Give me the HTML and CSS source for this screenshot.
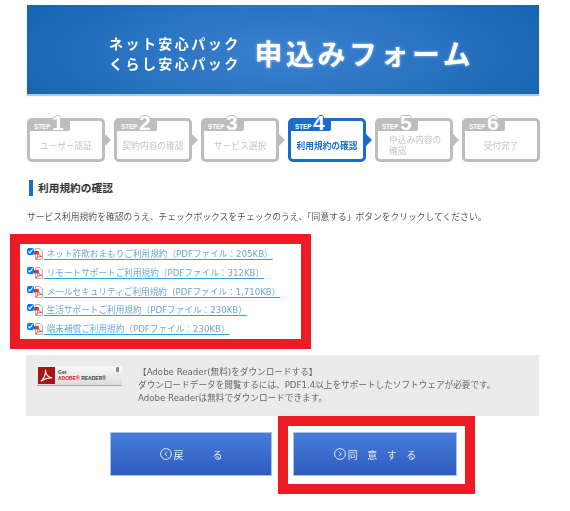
FILE: index.html
```html
<!DOCTYPE html>
<html lang="ja">
<head>
<meta charset="utf-8">
<title>申込みフォーム</title>
<link rel="stylesheet" href="styles.css">
</head>
<body>
<header class="banner">
  <div class="banner-sub"><span>ネット安心パック</span><span>くらし安心パック</span></div>
  <h1 class="banner-title">申込みフォーム</h1>
</header>

<ol class="steps">
  <li class="step"><div class="tab"><span class="tab-word">STEP</span><span class="tab-num">1</span></div><div class="step-label">ユーザー認証</div></li>
  <li class="step"><div class="tab"><span class="tab-word">STEP</span><span class="tab-num">2</span></div><div class="step-label">契約内容の確認</div></li>
  <li class="step"><div class="tab"><span class="tab-word">STEP</span><span class="tab-num">3</span></div><div class="step-label">サービス選択</div></li>
  <li class="step step-active"><div class="tab"><span class="tab-word">STEP</span><span class="tab-num">4</span></div><div class="step-label">利用規約の確認</div></li>
  <li class="step"><div class="tab"><span class="tab-word">STEP</span><span class="tab-num">5</span></div><div class="step-label step-label-wrap">申込み内容の<br>確認</div></li>
  <li class="step step-last"><div class="tab"><span class="tab-word">STEP</span><span class="tab-num">6</span></div><div class="step-label">受付完了</div></li>
</ol>

<h2 class="section-title">利用規約の確認</h2>
<p class="lead">サービス利用規約を確認のうえ、チェックボックスをチェックのうえ、「同意する」ボタンをクリックしてください。</p>

<ul class="terms">
  <li class="term"><input class="term-check" type="checkbox" checked><svg class="pdf" viewBox="0 0 9 12"><path d="M1.500 .5h4.500l2.500 2.500v8.500h-7z" fill="#f7f2f2" stroke="#a89090" stroke-width=".7"/><path d="M0 3h4.500v3.500h-4.500z" fill="#b8474a"/><path d="M2 11c1.500-2 2.500-5 2-8 0 3 1.500 5 4 5.500-2.500-.3-4.500 .6-6 2.500z" fill="none" stroke="#c4474b" stroke-width=".8"/></svg><a class="term-link" href="#">&nbsp;ネット詐欺おまもりご利用規約（PDFファイル：205KB）</a></li>
  <li class="term"><input class="term-check" type="checkbox" checked><svg class="pdf" viewBox="0 0 9 12"><path d="M1.500 .5h4.500l2.500 2.500v8.500h-7z" fill="#f7f2f2" stroke="#a89090" stroke-width=".7"/><path d="M0 3h4.500v3.500h-4.500z" fill="#b8474a"/><path d="M2 11c1.500-2 2.500-5 2-8 0 3 1.500 5 4 5.500-2.500-.3-4.500 .6-6 2.500z" fill="none" stroke="#c4474b" stroke-width=".8"/></svg><a class="term-link" href="#">&nbsp;リモートサポートご利用規約（PDFファイル：312KB）</a></li>
  <li class="term"><input class="term-check" type="checkbox" checked><svg class="pdf" viewBox="0 0 9 12"><path d="M1.500 .5h4.500l2.500 2.500v8.500h-7z" fill="#f7f2f2" stroke="#a89090" stroke-width=".7"/><path d="M0 3h4.500v3.500h-4.500z" fill="#b8474a"/><path d="M2 11c1.500-2 2.500-5 2-8 0 3 1.500 5 4 5.500-2.500-.3-4.500 .6-6 2.500z" fill="none" stroke="#c4474b" stroke-width=".8"/></svg><a class="term-link" href="#">&nbsp;メールセキュリティご利用規約（PDFファイル：1,710KB）</a></li>
  <li class="term"><input class="term-check" type="checkbox" checked><svg class="pdf" viewBox="0 0 9 12"><path d="M1.500 .5h4.500l2.500 2.500v8.500h-7z" fill="#f7f2f2" stroke="#a89090" stroke-width=".7"/><path d="M0 3h4.500v3.500h-4.500z" fill="#b8474a"/><path d="M2 11c1.500-2 2.500-5 2-8 0 3 1.500 5 4 5.500-2.500-.3-4.500 .6-6 2.500z" fill="none" stroke="#c4474b" stroke-width=".8"/></svg><a class="term-link" href="#">&nbsp;生活サポートご利用規約（PDFファイル：230KB）</a></li>
  <li class="term"><input class="term-check" type="checkbox" checked><svg class="pdf" viewBox="0 0 9 12"><path d="M1.500 .5h4.500l2.500 2.500v8.500h-7z" fill="#f7f2f2" stroke="#a89090" stroke-width=".7"/><path d="M0 3h4.500v3.500h-4.500z" fill="#b8474a"/><path d="M2 11c1.500-2 2.500-5 2-8 0 3 1.500 5 4 5.500-2.500-.3-4.500 .6-6 2.500z" fill="none" stroke="#c4474b" stroke-width=".8"/></svg><a class="term-link" href="#">&nbsp;端末補償ご利用規約（PDFファイル：230KB）</a></li>
</ul>

<section class="reader">
  <a class="reader-badge" href="#">
    <svg class="reader-logo" viewBox="0 0 18 18"><rect width="18" height="18" fill="#a81515"/><path d="M3 15c3-2 5-7 5-12 0 5 3 8 7 8.500-4-.3-8 1-12 3.500z" fill="none" stroke="#f3e7e7" stroke-width="1.300"/></svg>
    <span class="reader-copy"><span class="reader-get">Get</span><span class="reader-name"><b class="reader-adobe">ADOBE®</b> READER®</span></span>
    <span class="reader-mark"></span>
  </a>
  <div class="reader-text">
    <p>【Adobe Reader(無料)をダウンロードする】</p>
    <p>ダウンロードデータを閲覧するには、PDF1.4以上をサポートしたソフトウェアが必要です。</p>
    <p>Adobe Readerは無料でダウンロードできます。</p>
  </div>
</section>

<div class="actions">
  <a class="btn btn-back" href="#"><svg class="btn-icon" viewBox="0 0 12 12"><circle cx="6" cy="6" r="5.400" fill="none" stroke="#dfe8fa"/><path d="M7 3.700 4.800 6 7 8.300" fill="none" stroke="#dfe8fa"/></svg><span class="btn-text">戻　る</span></a>
  <div class="next-frame">
    <a class="btn" href="#"><svg class="btn-icon" viewBox="0 0 12 12"><circle cx="6" cy="6" r="5.400" fill="none" stroke="#dfe8fa"/><path d="M5 3.700 7.200 6 5 8.300" fill="none" stroke="#dfe8fa"/></svg><span class="btn-text">同意する</span></a>
  </div>
</div>
</body>
</html>
```
FILE: styles.css
```css
* { box-sizing: border-box; }
html, body { margin: 0; padding: 0; }
body {
  width: 570px;
  height: 511px;
  overflow: hidden;
  background: #fff;
  font-family: "DejaVu Sans", "Noto Sans CJK JP", sans-serif;
  color: #555;
}
p, h1, h2, ul, ol { margin: 0; padding: 0; list-style: none; }

.banner {
  margin: 5px 31px 0 27px;
  height: 89px;
  padding: 7px 0 0 82px;
  display: flex;
  align-items: center;
  gap: 14px;
  background: radial-gradient(ellipse 290px 90px at 50% 55%, #3a80cf 0%, #2b74c2 50%, #1764b1 100%);
  box-shadow: 0 2px 1px #b9c6d6;
  font-family: "Noto Sans CJK JP", sans-serif;
  color: #fff;
}
.banner-sub {
  display: flex;
  flex-direction: column;
  gap: 3px;
  font-size: 14px;
  line-height: 17px;
  font-weight: 700;
  letter-spacing: 2.450px;
  filter: blur(.3px);
}
.banner-title {
  font-size: 28px;
  line-height: 34px;
  font-weight: 700;
  letter-spacing: 3.500px;
  white-space: nowrap;
  text-shadow: 0 0 3px #a9cdf3;
  filter: blur(.3px);
}

.steps {
  margin: 24px 0 0 27px;
  display: flex;
  gap: 9px;
}
.step {
  position: relative;
  width: 78px;
  height: 44px;
  border: 3px solid #bdbdbd;
  border-radius: 5px;
  color: #bdbdbd;
  background: #fff;
}
.step::after {
  content: "";
  position: absolute;
  left: 75px;
  top: 13px;
  border-left: 6px solid currentColor;
  border-top: 6px solid transparent;
  border-bottom: 6px solid transparent;
}
.step-last::after { display: none; }
.step-active { border-color: #1a6bd0; color: #1a6bd0; }
.tab {
  width: 40px;
  height: 10px;
  display: flex;
  align-items: flex-end;
  justify-content: flex-start;
  padding-left: 4px;
  background: currentColor;
  border-bottom-right-radius: 2px;
}
.tab-word {
  width: 18px;
  font: 700 6.300px/9px "Liberation Sans", sans-serif;
  color: #fff;
}
.tab-num {
  font: 700 21px/14px "Liberation Sans", sans-serif;
  color: #fff;
  height: 14px;
  margin-bottom: 1px;
  text-shadow: 1px 0 0 #bdbdbd, -1px 0 0 #bdbdbd, 0 -1px 0 #bdbdbd;
}
.step-active .tab-num { text-shadow: 1px 0 0 #1a6bd0, -1px 0 0 #1a6bd0, 0 -1px 0 #1a6bd0; }
.step-label {
  height: 28px;
  display: flex;
  align-items: center;
  justify-content: center;
  font-family: "Noto Sans CJK JP", sans-serif;
  font-size: 8.700px;
  color: #c4c4c4;
  white-space: nowrap;
  filter: blur(.3px);
}
.step-label-wrap {
  display: block;
  padding: 3px 0 0 11px;
  line-height: 11px;
}
.step-active .step-label { color: #1a6bd0; font-weight: 700; }

.section-title {
  margin: 18px 0 0 29px;
  height: 16px;
  padding-left: 5px;
  border-left: 4px solid #1a6bd0;
  font-family: "Noto Sans CJK JP", sans-serif;
  font-size: 10.700px;
  line-height: 16px;
  font-weight: 700;
  color: #333;
}
.lead {
  margin: 14px 0 0 27px;
  font-family: "Noto Sans CJK JP", sans-serif;
  font-size: 8.770px;
  line-height: 14px;
  white-space: nowrap;
  filter: blur(.25px);
}

.terms {
  margin: 10px 0 0 10px;
  width: 301px;
  height: 115px;
  border: 10px solid #ed1c24;
  padding-left: 7px;
}
.term {
  height: 18.700px;
  display: flex;
  align-items: center;
  white-space: nowrap;
}
.term-check {
  width: 7px;
  height: 7px;
  margin: -3px 0 0;
  flex: none;
}
.pdf { width: 9px; height: 12px; flex: none; margin: 2px 0 0 0; }
.term-link {
  margin: 0 0 0 1px;
  font-size: 8.650px;
  color: #6aa9cf;
  text-decoration-color: #35a4dd;
  text-underline-offset: 2px;
  filter: blur(.2px);
}

.reader {
  margin: 6px 0 0 26px;
  width: 513px;
  height: 61px;
  padding: 10.500px 0 0 11px;
  display: flex;
  gap: 16px;
  background: #ebebeb;
}
.reader-badge {
  position: relative;
  width: 85px;
  height: 20px;
  margin-top: .5px;
  padding: 1px;
  display: flex;
  gap: 3px;
  background: linear-gradient(#fafafa, #dcdcdc);
  border-bottom: 1px solid #aaa;
  text-decoration: none;
  flex: none;
}
.reader-logo { width: 17px; height: 17px; flex: none; }
.reader-copy {
  display: flex;
  flex-direction: column;
  font: 700 5px/6px "Liberation Sans", sans-serif;
  color: #444;
  padding-top: 2px;
  white-space: nowrap;
}
.reader-adobe { color: #d5232a; }
.reader-mark {
  position: absolute;
  right: 3px;
  top: 1px;
  width: 3px;
  height: 5px;
  background: #8a8a8a;
  border-radius: 1px;
}
.reader-text {
  font-size: 8.650px;
  line-height: 13px;
  color: #666;
  white-space: nowrap;
  filter: blur(.2px);
}

.actions {
  margin-left: 110px;
  display: flex;
  align-items: flex-start;
  gap: 6px;
}
.btn {
  width: 164px;
  height: 44px;
  display: flex;
  align-items: center;
  justify-content: center;
  gap: 2px;
  background: linear-gradient(#467fd9, #2f5abf);
  border: 1px solid #a9c1ec;
  color: #e8eefb;
  text-decoration: none;
  font-family: "Noto Sans CJK JP", sans-serif;
  font-size: 10px;
}
.btn-back { width: 162px; margin-top: 16px; }
.btn-icon { width: 12px; height: 12px; flex: none; }
.btn-text { letter-spacing: 9.500px; margin-right: -9.500px; filter: blur(.2px); }
.next-frame {
  border: 10px solid #ed1c24;
  padding: 6px 8px 8px 5px;
  background: #fff;
}
```
